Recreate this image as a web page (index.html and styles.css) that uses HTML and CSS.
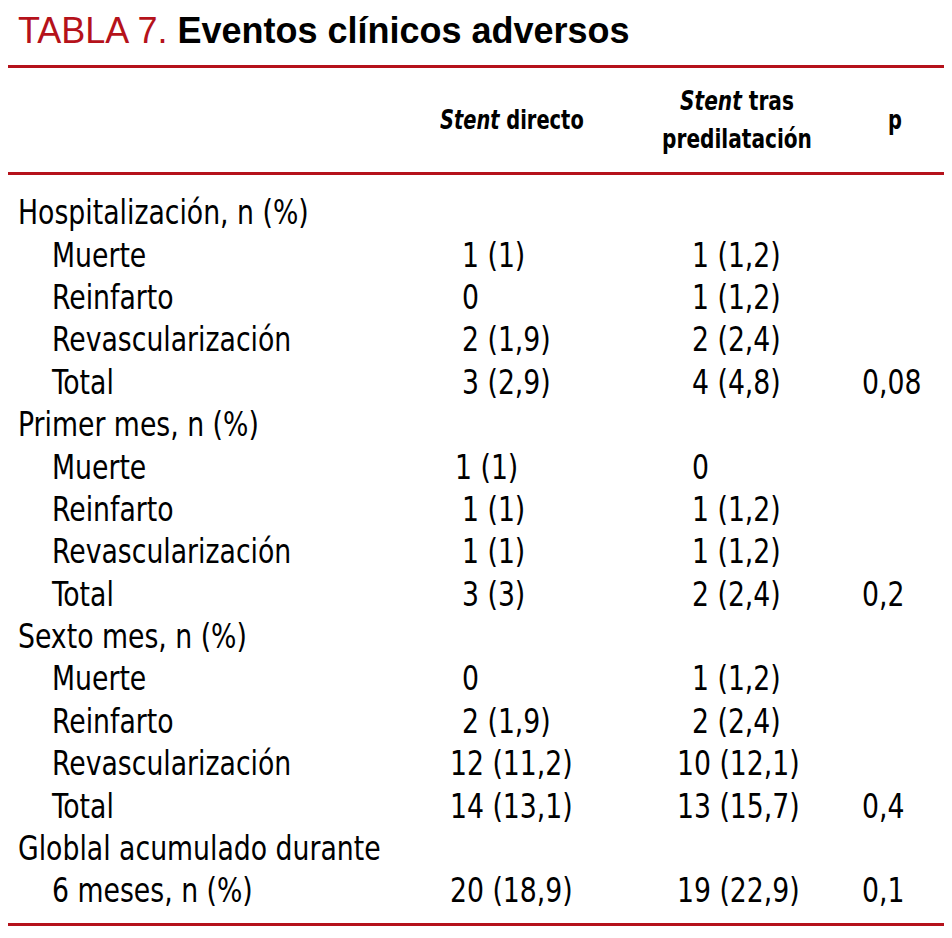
FILE: index.html
```html
<!DOCTYPE html>
<html lang="es">
<head>
<meta charset="utf-8">
<link rel="stylesheet" href="styles.css">
</head>
<body>
<div class="page">
  <h1 class="title"><span class="lab">TABLA 7.</span> <span class="name">Eventos clínicos adversos</span></h1>
  <div class="table">
    <div class="head">
      <div></div>
      <div class="h2"><i>Stent</i> directo</div>
      <div class="h3"><i>Stent</i> tras<br>predilatación</div>
      <div class="h4">p</div>
    </div>
    <div class="body">
      <div class="row"><div class="lbl">Hospitalización, n (%)</div><div></div><div></div><div></div></div>
      <div class="row"><div class="lbl sub">Muerte</div><div class="c2 s">1 (1)</div><div class="c3 s">1 (1,2)</div><div></div></div>
      <div class="row"><div class="lbl sub">Reinfarto</div><div class="c2 s">0</div><div class="c3 s">1 (1,2)</div><div></div></div>
      <div class="row"><div class="lbl sub">Revascularización</div><div class="c2 s">2 (1,9)</div><div class="c3 s">2 (2,4)</div><div></div></div>
      <div class="row"><div class="lbl sub">Total</div><div class="c2 s">3 (2,9)</div><div class="c3 s">4 (4,8)</div><div class="c4">0,08</div></div>
      <div class="row"><div class="lbl">Primer mes, n (%)</div><div></div><div></div><div></div></div>
      <div class="row"><div class="lbl sub">Muerte</div><div class="c2 m">1 (1)</div><div class="c3 s">0</div><div></div></div>
      <div class="row"><div class="lbl sub">Reinfarto</div><div class="c2 s">1 (1)</div><div class="c3 s">1 (1,2)</div><div></div></div>
      <div class="row"><div class="lbl sub">Revascularización</div><div class="c2 s">1 (1)</div><div class="c3 s">1 (1,2)</div><div></div></div>
      <div class="row"><div class="lbl sub">Total</div><div class="c2 s">3 (3)</div><div class="c3 s">2 (2,4)</div><div class="c4">0,2</div></div>
      <div class="row"><div class="lbl">Sexto mes, n (%)</div><div></div><div></div><div></div></div>
      <div class="row"><div class="lbl sub">Muerte</div><div class="c2 s">0</div><div class="c3 s">1 (1,2)</div><div></div></div>
      <div class="row"><div class="lbl sub">Reinfarto</div><div class="c2 s">2 (1,9)</div><div class="c3 s">2 (2,4)</div><div></div></div>
      <div class="row"><div class="lbl sub">Revascularización</div><div class="c2">12 (11,2)</div><div class="c3">10 (12,1)</div><div></div></div>
      <div class="row"><div class="lbl sub">Total</div><div class="c2">14 (13,1)</div><div class="c3">13 (15,7)</div><div class="c4">0,4</div></div>
      <div class="row"><div class="lbl">Globlal acumulado durante</div><div></div><div></div><div></div></div>
      <div class="row"><div class="lbl sub">6 meses, n (%)</div><div class="c2">20 (18,9)</div><div class="c3">19 (22,9)</div><div class="c4">0,1</div></div>
    </div>
  </div>
</div>
</body>
</html>
```

FILE: styles.css
```css
html, body {
  margin: 0;
  padding: 0;
  background: #ffffff;
}
body {
  padding: 8px;
  font-family: "DejaVu Sans Condensed", "Liberation Sans", sans-serif;
  color: #000;
}
.page {
  width: 936px;
}
.title {
  margin: 0;
  padding: 3px 0 14px 10px;
  font-family: "Liberation Sans", Arial, sans-serif;
  font-size: 36px;
  line-height: 40px;
  font-weight: normal;
  white-space: nowrap;
}
.lab {
  color: #b5121b;
}
.name {
  font-weight: bold;
}
.table {
  border-top: 3px solid #b5121b;
  border-bottom: 3px solid #b5121b;
}
.head {
  display: grid;
  grid-template-columns: 432px 209px 176px 1fr;
  align-items: center;
  height: 104px;
  border-bottom: 3px solid #b5121b;
  font-weight: bold;
  font-size: 26px;
  line-height: 38px;
  white-space: nowrap;
}
.head > div {
  transform: scaleX(0.83);
  transform-origin: left center;
}
.head i {
  font-style: italic;
}
.head > .h3 {
  text-align: center;
  transform: scaleX(0.86);
  transform-origin: center center;
}
.head > .h4 {
  margin-left: 63px;
}
.body {
  padding: 16px 0 11px;
}
.row {
  display: grid;
  grid-template-columns: 442px 227px 185px 1fr;
  height: 42.4px;
  align-items: center;
  font-size: 34px;
  line-height: 42px;
  white-space: nowrap;
}
.row > div {
  transform: scaleX(0.873);
  transform-origin: left center;
}
.lbl {
  margin-left: 10px;
}
.lbl.sub {
  margin-left: 44px;
}
.c2.s {
  margin-left: 12px;
}
.c2.m {
  margin-left: 5px;
}
.c3.s {
  margin-left: 15px;
}
```
